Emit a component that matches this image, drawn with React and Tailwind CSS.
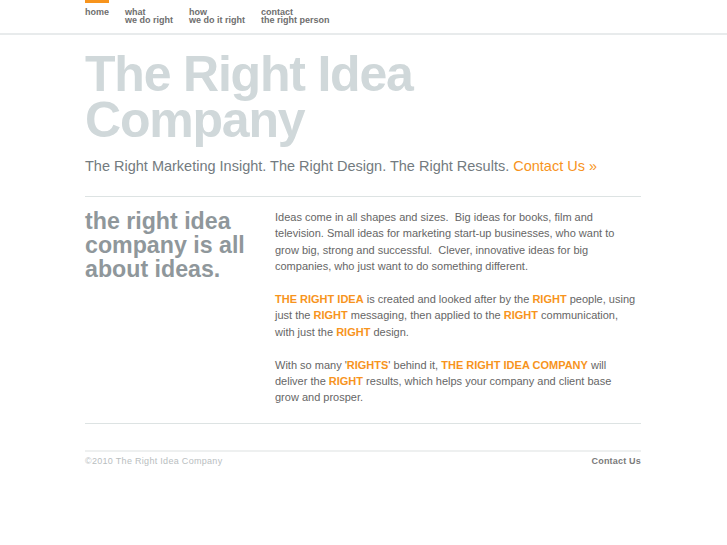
import React from 'react'

const O = ({ children }) => <b className="font-bold text-[#f7941d]">{children}</b>

const navItems = [
  { top: 'home', bottom: '', active: true },
  { top: 'what', bottom: 'we do right' },
  { top: 'how', bottom: 'we do it right' },
  { top: 'contact', bottom: 'the right person' },
]

export default function App() {
  return (
    <div className="min-h-[545px] bg-white font-['Liberation_Sans',Arial,sans-serif]">
      <div className="h-[35px] border-b-2 border-[#e8ebec]">
        <div className="ml-[85px] w-[556px] flex gap-[16px]">
          {navItems.map((item) => (
            <div key={item.top} className="flex flex-col">
              <div className={`h-[3px] ${item.active ? 'bg-[#f7941d]' : 'bg-transparent'}`} />
              <div className="pt-[5px] text-[9px] leading-[8px] font-bold text-[#6e6e6e]">
                <div>{item.top}</div>
                {item.bottom && <div>{item.bottom}</div>}
              </div>
            </div>
          ))}
        </div>
      </div>

      <div className="ml-[85px] w-[556px]">
        <h1 className="pt-[16px] text-[50px] leading-[46px] font-bold tracking-[-1.2px] text-[#d0d8da]">
          The Right Idea
          <br />
          Company
        </h1>
        <p className="mt-[14px] text-[14.5px] leading-[18px] text-[#737b80]">
          The Right Marketing Insight. The Right Design. The Right Results.{' '}
          <span className="text-[#f7941d]">Contact Us »</span>
        </p>

        <div className="mt-[21px] border-t border-[#dde3e3]" />

        <div className="grid grid-cols-[190px_362px] pt-[12px] pb-[17px]">
          <h2 className="text-[23.2px] leading-[24px] font-bold text-[#8f979b]">
            the right idea company is all about ideas.
          </h2>
          <div className="text-[11px] leading-[16.4px] text-[#666] space-y-[16.4px]">
            <p>
              Ideas come in all shapes and sizes.&nbsp; Big ideas for books, film and television. Small ideas for
              marketing start-up businesses, who want to grow big, strong and successful.&nbsp; Clever, innovative
              ideas for big companies, who just want to do something different.
            </p>
            <p>
              <O>THE RIGHT IDEA</O> is created and looked after by the <O>RIGHT</O> people, using just the{' '}
              <O>RIGHT</O> messaging, then applied to the <O>RIGHT</O> communication, with just the <O>RIGHT</O>{' '}
              design.
            </p>
            <p>
              With so many '<O>RIGHTS</O>' behind it, <O>THE RIGHT IDEA COMPANY</O> will deliver the <O>RIGHT</O>{' '}
              results, which helps your company and client base grow and prosper.
            </p>
          </div>
        </div>

        <div className="border-t border-[#dde3e3]" />
        <div className="mt-[26px] border-t-2 border-[#eef0f0]" />
        <div className="flex justify-between pt-[3px] text-[9px] leading-[12px]">
          <span className="text-[#b9bebf] tracking-[0.3px]">©2010 The Right Idea Company</span>
          <span className="font-bold text-[#7a7a7a] tracking-[0.2px]">Contact Us</span>
        </div>
      </div>
    </div>
  )
}
